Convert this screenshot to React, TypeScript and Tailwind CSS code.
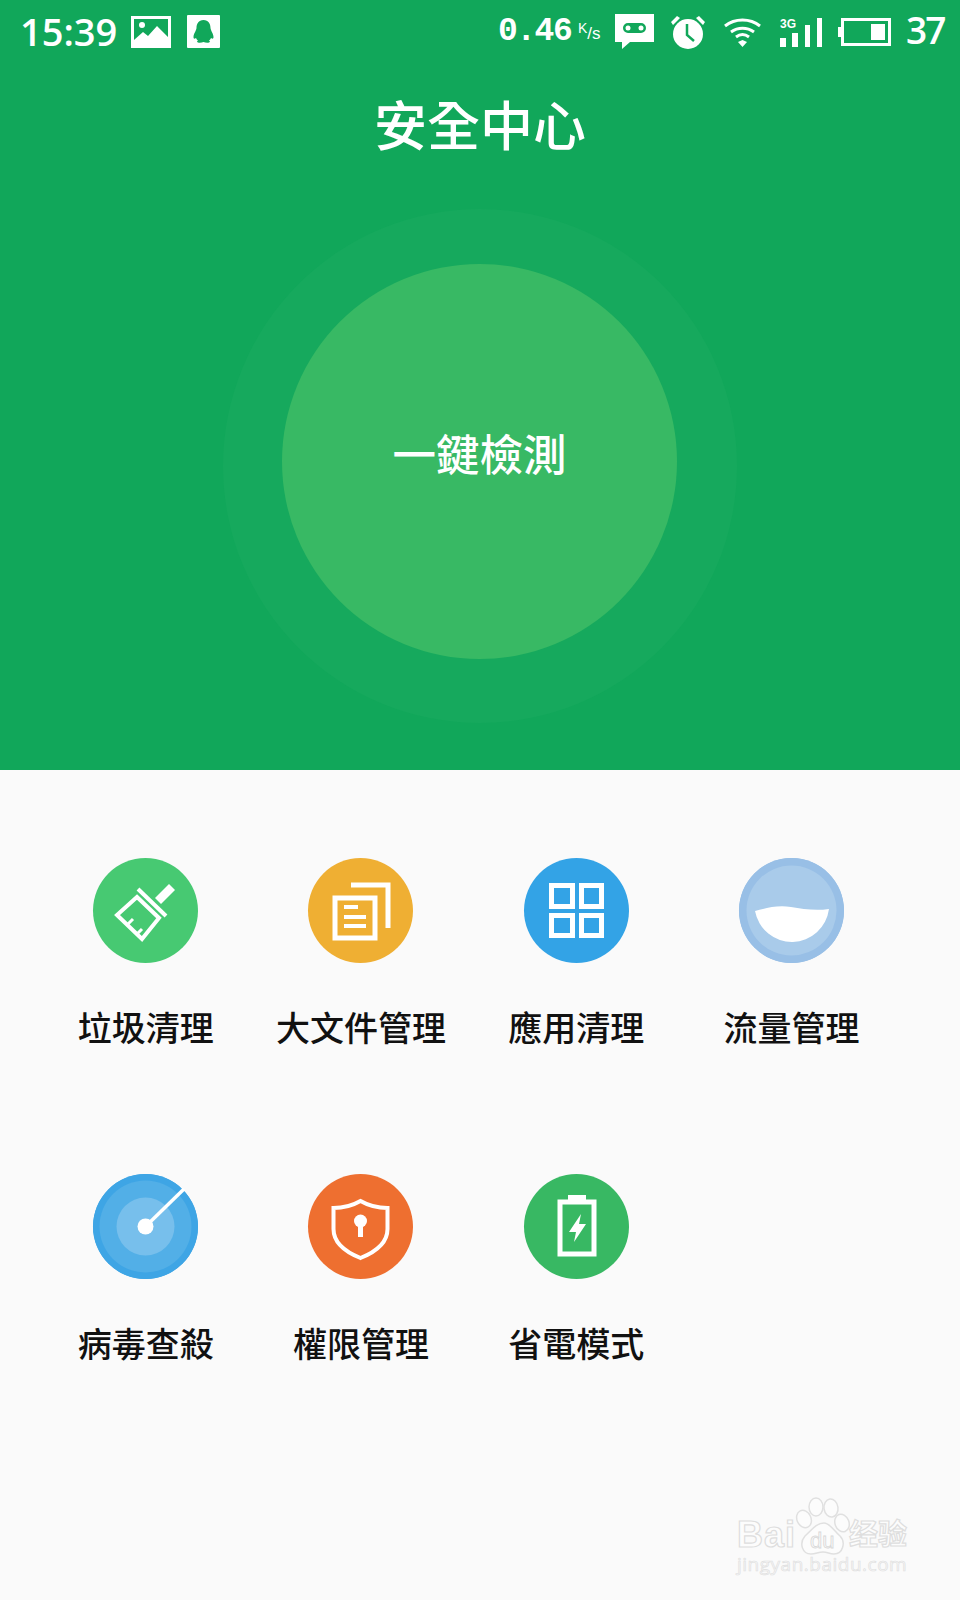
import type { ReactNode } from 'react';

const cjk = "font-['Noto_Sans_CJK_TC','Noto_Sans_CJK_SC',sans-serif]";

function ImageIcon() {
  return (
    <svg width="40" height="32" viewBox="0 0 40 32">
      <path fillRule="evenodd" fill="#fff" d="M0 0h40v32H0zM3 3v21l9-8 5 4 9-10 11 11V3z" />
      <circle cx="11" cy="9" r="3" fill="#fff" />
    </svg>
  );
}

function QQIcon() {
  return (
    <svg width="33" height="33" viewBox="0 0 33 33">
      <path
        fillRule="evenodd"
        fill="#fff"
        d="M1 0h31a1 1 0 0 1 1 1v31a1 1 0 0 1-1 1H1a1 1 0 0 1-1-1V1a1 1 0 0 1 1-1zM16.500 5c-5 0-7 4-7 8 0 2-3 6-3 9 0 2 1 2 2.500 1 .5 1 1 2 2 2.500-1 .5-1.500 1.500 0 2 2 .5 4 0 5.500-.5 1.500.5 3.500 1 5.500.5 1.500-.5 1-1.500 0-2 1-.5 1.500-1.500 2-2.500 1.500 1 2.500 1 2.500-1 0-3-3-7-3-9 0-4-2-8-7-8z"
      />
    </svg>
  );
}

function StatusIcons() {
  return (
    <div className="flex items-center">
      <span className="font-['Liberation_Mono',monospace] text-[33px] leading-none text-white font-bold tracking-[-1.500px] w-[80px]">0.46</span>
      <span className="font-['Liberation_Sans',sans-serif] text-white leading-none w-[37px] flex items-start">
        <span className="text-[14px] mb-2">K</span>
        <span className="text-[17px] mt-1">/s</span>
      </span>
      <svg width="39" height="35" viewBox="0 0 39 35">
        <path fillRule="evenodd" fill="#fff" d="M0 0h39v28H15l-8 7v-7H0zM13 9a5 5 0 0 0 0 10h13a5 5 0 0 0 0-10z" />
        <circle cx="13" cy="14" r="2.500" fill="#fff" />
        <circle cx="26" cy="14" r="2.500" fill="#fff" />
      </svg>
      <svg className="ml-[16px]" width="36" height="36" viewBox="0 0 36 36">
        <circle cx="18" cy="20" r="15" fill="#fff" />
        <path d="M17 10v11l7 6" fill="none" stroke="#11a75a" strokeWidth="2.500" />
        <path d="M1 8l6-6 3 2-7 7zM35 8l-6-6-3 2 7 7z" fill="#fff" />
      </svg>
      <svg className="ml-[17px]" width="39" height="30" viewBox="0 0 39 30">
        <path d="M2 9c10-8 25-8 35 0" fill="none" stroke="#fff" strokeWidth="3" />
        <path d="M8 15c7-5 16-5 23 0" fill="none" stroke="#fff" strokeWidth="3" />
        <path d="M13 20c4-3 9-3 13 0" fill="none" stroke="#fff" strokeWidth="3" />
        <path d="M15 25l4.500-2 4.500 2-4.500 5z" fill="#fff" />
      </svg>
      <svg className="ml-[18px]" width="43" height="30" viewBox="0 0 43 30">
        <rect x="0" y="21" width="6" height="9" fill="#fff" />
        <rect x="12" y="16" width="6" height="14" fill="#fff" />
        <rect x="25" y="8" width="5" height="22" fill="#fff" />
        <rect x="37" y="1" width="5" height="29" fill="#fff" />
        <text x="0" y="11" fontSize="12" fontWeight="700" fill="#fff" fontFamily="Liberation Sans">3G</text>
      </svg>
      <svg className="ml-[15px]" width="53" height="28" viewBox="0 0 53 28">
        <path fill="#fff" d="M0 9h3v10H0z" />
        <rect x="4.500" y="1.500" width="47" height="25" fill="none" stroke="#fff" strokeWidth="3" />
        <rect x="33" y="6" width="14" height="16" fill="#fff" />
      </svg>
      <span className="font-['Open_Sans',sans-serif] text-white text-[37px] leading-none ml-[15px] w-[39px] font-semibold mb-[4px] tracking-[-2px]">37</span>
    </div>
  );
}

function BroomIcon() {
  return (
    <svg width="105" height="105" viewBox="0 0 105 105">
      <path d="M44 39L66 60 49 81 24 57z" fill="none" stroke="#fff" strokeWidth="4" strokeLinejoin="miter" />
      <path d="M45 31l28 27" fill="none" stroke="#fff" strokeWidth="4" />
      <path d="M76 26l6 6-14 14-6-6z" fill="#fff" />
      <path d="M34 67l6-6M44 76l5-5" fill="none" stroke="#fff" strokeWidth="3" />
    </svg>
  );
}

function FilesIcon() {
  return (
    <svg width="105" height="105" viewBox="0 0 105 105">
      <path d="M43 27h37v43" fill="none" stroke="#fff" strokeWidth="5" />
      <rect x="27" y="40" width="40" height="40" fill="none" stroke="#fff" strokeWidth="5" />
      <path d="M36 49h14M36 59h22M36 68h22" fill="none" stroke="#fff" strokeWidth="4" />
    </svg>
  );
}

function GridIcon() {
  return (
    <svg width="105" height="105" viewBox="0 0 105 105">
      <g fill="none" stroke="#fff" strokeWidth="5">
        <rect x="27.500" y="27.500" width="21" height="21" />
        <rect x="57.500" y="27.500" width="20" height="21" />
        <rect x="27.500" y="57.500" width="21" height="20" />
        <rect x="57.500" y="57.500" width="20" height="20" />
      </g>
    </svg>
  );
}

function TrafficIcon() {
  return (
    <svg width="105" height="105" viewBox="0 0 105 105">
      <circle cx="52.500" cy="52.500" r="52.500" fill="#98bfe6" />
      <circle cx="52.500" cy="52.500" r="45" fill="#a9cbea" />
      <path d="M16 53C28 50 38 47 52 49 64 51 76 53 90 51A37.500 38 0 0 1 16 53z" fill="#fff" />
    </svg>
  );
}

function RadarIcon() {
  return (
    <svg width="105" height="105" viewBox="0 0 105 105">
      <circle cx="52.500" cy="52.500" r="52.500" fill="#3ea5e5" />
      <circle cx="52.500" cy="52.500" r="46" fill="#52afe7" />
      <circle cx="52.500" cy="52.500" r="29" fill="#77bfec" />
      <path d="M52.500 52.500L91 15" stroke="#fff" strokeWidth="3.500" />
      <circle cx="52.500" cy="52.500" r="8" fill="#fff" />
    </svg>
  );
}

function ShieldIcon() {
  return (
    <svg width="105" height="105" viewBox="0 0 105 105">
      <path d="M52.500 27c7 4 15 7 27 7v21c0 14-12 23-27 29-15-6-27-15-27-29V34c12 0 20-3 27-7z" fill="none" stroke="#fff" strokeWidth="4" />
      <circle cx="52.500" cy="47" r="6.500" fill="#fff" />
      <path d="M50 48h5v15h-5z" fill="#fff" />
    </svg>
  );
}

function BatteryIcon() {
  return (
    <svg width="105" height="105" viewBox="0 0 105 105">
      <path d="M44 21h18v5H44z" fill="#fff" />
      <rect x="36" y="28" width="34" height="52" fill="none" stroke="#fff" strokeWidth="5" />
      <path d="M57 40L45 58h7l-2 10 12-18h-7z" fill="#fff" />
    </svg>
  );
}

function BaiduMark() {
  const stroke = '#e0e0e0';
  return (
    <div className="absolute left-[737px] top-[1497px] w-[172px] h-[85px]">
      <svg className="absolute left-[57px] top-0" width="58" height="62" viewBox="0 0 58 62">
        <g fill="#fcfcfc" stroke={stroke} strokeWidth="1.500">
          <ellipse cx="10" cy="22" rx="7" ry="9" transform="rotate(-25 10 22)" />
          <ellipse cx="22" cy="10" rx="7" ry="9" />
          <ellipse cx="37" cy="11" rx="7" ry="9" transform="rotate(-8 37 11)" />
          <ellipse cx="48" cy="26" rx="7" ry="9" transform="rotate(-20 48 26)" />
          <path d="M30 26c6 0 10 8 16 13 6 6 3 18-6 18-5 0-6-2-11-2s-7 2-12 2c-9 0-12-11-6-18 6-5 11-13 19-13z" />
        </g>
      </svg>
      <span className="absolute left-0 top-[20px] font-['Liberation_Sans',sans-serif] font-bold text-[36px] leading-none tracking-[1px] text-[#fcfcfc] [-webkit-text-stroke:1.200px_#dedede]">Bai</span>
      <span className="absolute left-[73px] top-[33px] font-['Liberation_Sans',sans-serif] text-[22px] leading-none text-[#fafafa] [-webkit-text-stroke:0.8px_#d8d8d8]">du</span>
      <span className={`absolute left-[112px] top-[21px] ${cjk} font-bold text-[29px] leading-none text-[#fcfcfc] [-webkit-text-stroke:1.200px_#dedede]`}>经验</span>
      <span className="absolute left-0 top-[58px] font-['Open_Sans',sans-serif] text-[19px] leading-none tracking-[0.5px] text-[#f6f6f6] [-webkit-text-stroke:0.6px_#dedede] whitespace-nowrap">jingyan.baidu.com</span>
    </div>
  );
}

type Tool = { label: string; color: string; icon: ReactNode };

const tools: Tool[] = [
  { label: '垃圾清理', color: 'bg-[#47c972]', icon: <BroomIcon /> },
  { label: '大文件管理', color: 'bg-[#efaf33]', icon: <FilesIcon /> },
  { label: '應用清理', color: 'bg-[#33a3e6]', icon: <GridIcon /> },
  { label: '流量管理', color: 'bg-[#98bfe6]', icon: <TrafficIcon /> },
  { label: '病毒查殺', color: 'bg-[#3ea5e5]', icon: <RadarIcon /> },
  { label: '權限管理', color: 'bg-[#ee6f30]', icon: <ShieldIcon /> },
  { label: '省電模式', color: 'bg-[#38b863]', icon: <BatteryIcon /> },
];

export default function App() {
  return (
    <div className={`relative w-[960px] h-[1600px] overflow-hidden bg-[#fafafa] ${cjk}`}>
      <div className="h-[770px] bg-[#11a75a] flex flex-col">
        <div className="h-[62px] flex items-center justify-between pl-[20px] pr-[15px] pt-[1px]">
          <div className="flex items-center">
            <span className="font-['Open_Sans',sans-serif] font-semibold text-white text-[38px] leading-none w-[111px] mb-[2px]">15:39</span>
            <ImageIcon />
            <span className="ml-[16px]"><QQIcon /></span>
          </div>
          <StatusIcons />
        </div>
        <div className="mt-[31px] text-center text-white text-[53px] leading-[60px] font-medium">安全中心</div>
        <div className="mt-[56px] mx-auto w-[514px] h-[514px] rounded-full bg-[#16a95d] flex items-center justify-center">
          <button className="mb-[9px] mr-[1px] w-[395px] h-[395px] rounded-full bg-[#38b964] text-white text-[43.500px] leading-none font-medium">
            <span className="block mb-[18px]">一鍵檢測</span>
          </button>
        </div>
      </div>

      <div className="grid grid-cols-[215.300px_215.300px_215.300px_215.300px] pl-[38px] pt-[88px] gap-y-[127px]">
        {tools.map((tool) => (
          <div key={tool.label} className="flex flex-col items-center">
            <div className={`w-[105px] h-[105px] rounded-full ${tool.color}`}>{tool.icon}</div>
            <span className="mt-[44px] text-[34px] leading-[40px] font-medium text-[#111] whitespace-nowrap">{tool.label}</span>
          </div>
        ))}
      </div>

      <BaiduMark />
    </div>
  );
}
